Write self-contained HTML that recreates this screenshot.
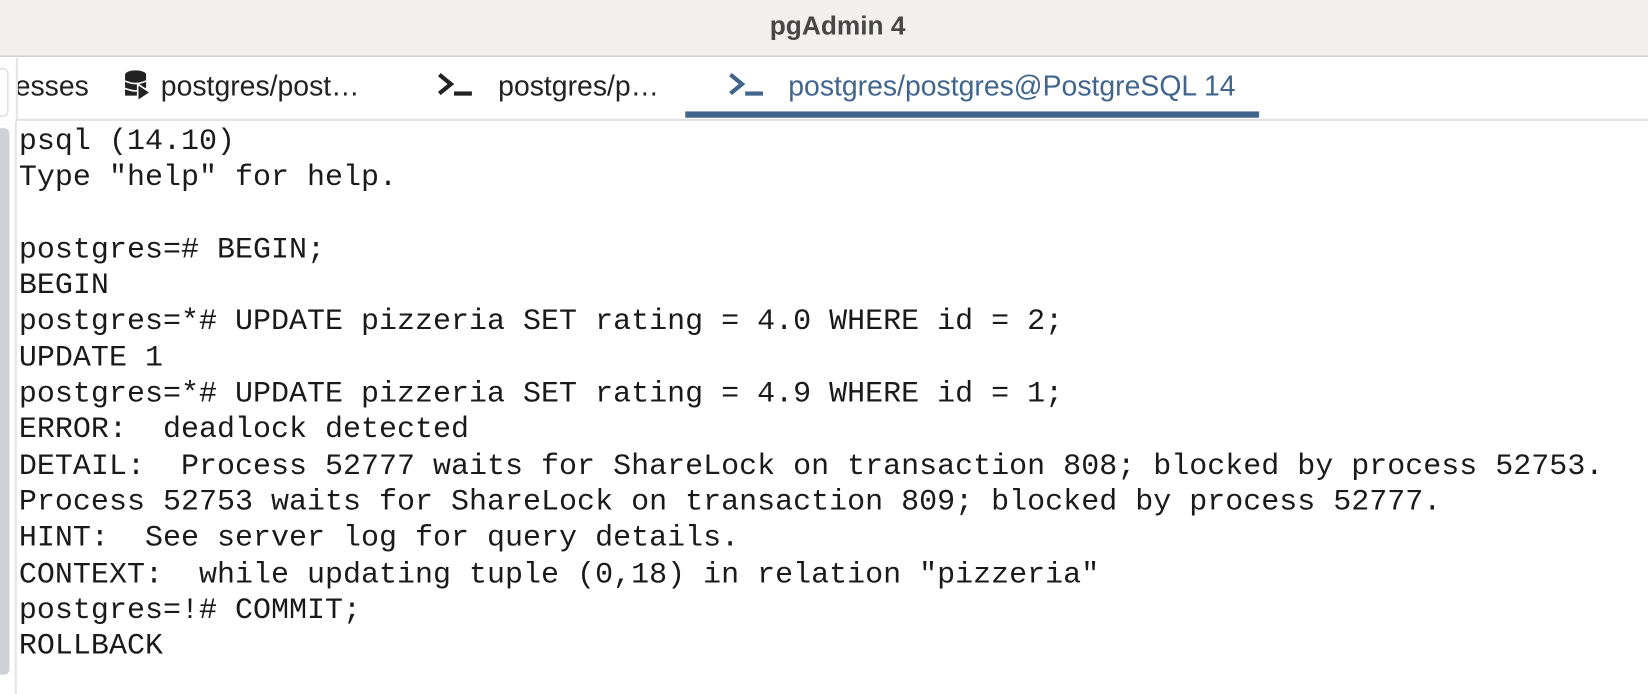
<!DOCTYPE html>
<html><head><meta charset="utf-8"><style>
*{margin:0;padding:0;box-sizing:border-box}
html,body{width:1648px;height:660px;overflow:hidden;background:#fff}
#wrap{position:absolute;left:0;top:0;width:1568px;height:628px;transform:scale(1.0510);transform-origin:0 0;font-family:"Liberation Sans",sans-serif}
#title{position:absolute;left:26px;top:0;width:1542px;height:54px;text-align:center;font-weight:bold;font-size:25px;line-height:50px;color:#474747}
#tbg{position:absolute;left:0;top:0;width:1568px;height:54px;background:#f1f0ef;border-bottom:1px solid #c4c4c4}
#tabs{position:absolute;left:0;top:55px;width:1568px;height:60px;background:#fff;border-bottom:2px solid #dfe1e5}
.tab{position:absolute;top:0;height:56px;line-height:54px;font-size:27px;color:#222;white-space:nowrap}
#left{position:absolute;left:0;top:55px;width:16px;height:605px;border-right:2px solid #e2e4e8}
#thumb{position:absolute;left:0;top:122px;width:9px;height:520px;background:#cdd1d8;border-radius:0 5px 5px 0}
#term{position:absolute;left:18px;top:118px;font-family:"Liberation Mono",monospace;font-size:28.55px;line-height:34.3px;color:#1a1a1a;white-space:pre}
</style></head><body><div id="wrap">
<div id="tbg"></div>
<div id="title">pgAdmin 4</div>
<div id="tabs">
<div class="tab" style="left:14px">esses</div>
<div class="tab" style="left:118px"><svg width="28" height="34" viewBox="0 0 28 34" style="vertical-align:middle;margin-top:-4px"><ellipse cx="11" cy="6" rx="10" ry="4" fill="#222"/><rect x="1" y="6" width="20" height="20" fill="#222"/><path d="M1 12q10 5 20 0M1 19q10 5 20 0" stroke="#fff" stroke-width="1.5" fill="none"/><path d="M13 15l12 8-12 8z" fill="#222" stroke="#fff" stroke-width="1.5"/></svg></div>
<div class="tab" style="left:153px">postgres/post…</div>
<div class="tab" style="left:415px"><svg width="36" height="30" viewBox="0 0 36 30" style="vertical-align:middle;margin-top:-4px"><path d="M3 4l11 9-11 9" stroke="#222" stroke-width="4" fill="none"/><rect x="17" y="20" width="17" height="4" fill="#222"/></svg></div>
<div class="tab" style="left:474px">postgres/p…</div>
<div class="tab" style="left:692px;color:#41658c"><svg width="36" height="30" viewBox="0 0 36 30" style="vertical-align:middle;margin-top:-4px"><path d="M3 4l11 9-11 9" stroke="#41658c" stroke-width="4" fill="none"/><rect x="17" y="20" width="17" height="4" fill="#41658c"/></svg></div>
<div class="tab" style="left:750px;color:#41658c">postgres/postgres@PostgreSQL 14</div>
<div style="position:absolute;left:652px;top:51px;width:546px;height:6px;background:#41658c"></div>
</div>
<div id="left"></div>
<div id="thumb"></div>
<div style="position:absolute;left:0;top:55px;width:17px;height:60px;background:#fff;border-right:2px solid #e2e4e8"><div style="position:absolute;left:-10px;top:10px;width:18px;height:46px;border:1px solid #d0d3d8;border-radius:5px"></div></div>
<div id="term">psql (14.10)
Type "help" for help.

postgres=# BEGIN;
BEGIN
postgres=*# UPDATE pizzeria SET rating = 4.0 WHERE id = 2;
UPDATE 1
postgres=*# UPDATE pizzeria SET rating = 4.9 WHERE id = 1;
ERROR:  deadlock detected
DETAIL:  Process 52777 waits for ShareLock on transaction 808; blocked by process 52753.
Process 52753 waits for ShareLock on transaction 809; blocked by process 52777.
HINT:  See server log for query details.
CONTEXT:  while updating tuple (0,18) in relation "pizzeria"
postgres=!# COMMIT;
ROLLBACK</div>
</div></body></html>
